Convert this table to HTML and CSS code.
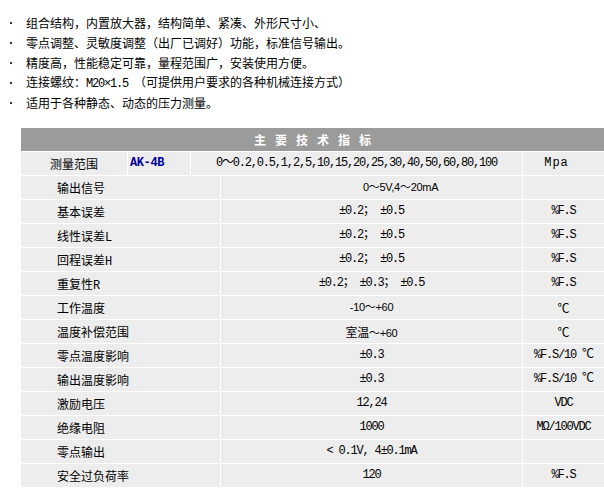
FILE: index.html
```html
<!DOCTYPE html>
<html lang="zh">
<head>
<meta charset="utf-8">
<title>主要技术指标</title>
<link rel="stylesheet" href="styles.css">
</head>
<body>
<ul class="features">
  <li><span class="dot"></span><span>组合结构，内置放大器，结构简单、紧凑、外形尺寸小、</span></li>
  <li><span class="dot"></span><span>零点调整、灵敏度调整（出厂已调好）功能，标准信号输出。</span></li>
  <li><span class="dot"></span><span>精度高，性能稳定可靠，量程范围广，安装使用方便。</span></li>
  <li><span class="dot"></span><span>连接螺纹：<span class="mono">M20×1.5 </span>（可提供用户要求的各种机械连接方式）</span></li>
  <li><span class="dot"></span><span>适用于各种静态、动态的压力测量。</span></li>
</ul>

<div class="spec">
  <div class="head">主要技术指标</div>
  <div class="row first">
    <div class="cell c">测量范围</div>
    <div class="cell model">AK-4B</div>
    <div class="cell c mono">0～0.2,0.5,1,2,5,10,15,20,25,30,40,50,60,80,100</div>
    <div class="cell c mono wide">Mpa</div>
  </div>
  <div class="row">
    <div class="cell label">输出信号</div>
    <div class="cell sans shift">0～5V,4～20mA</div>
    <div class="cell"></div>
  </div>
  <div class="row">
    <div class="cell label">基本误差</div>
    <div class="cell c mono">±0.2； ±0.5</div>
    <div class="cell c mono">%F.S</div>
  </div>
  <div class="row">
    <div class="cell label">线性误差<span class="mono">L</span></div>
    <div class="cell c mono">±0.2； ±0.5</div>
    <div class="cell c mono">%F.S</div>
  </div>
  <div class="row">
    <div class="cell label">回程误差<span class="mono">H</span></div>
    <div class="cell c mono">±0.2； ±0.5</div>
    <div class="cell c mono">%F.S</div>
  </div>
  <div class="row">
    <div class="cell label">重复性<span class="mono">R</span></div>
    <div class="cell c mono">±0.2； ±0.3； ±0.5</div>
    <div class="cell c mono">%F.S</div>
  </div>
  <div class="row">
    <div class="cell label">工作温度</div>
    <div class="cell c sans">-10～+60</div>
    <div class="cell c">℃</div>
  </div>
  <div class="row">
    <div class="cell label">温度补偿范围</div>
    <div class="cell c sans"><span class="cjk">室温</span>～+60</div>
    <div class="cell c">℃</div>
  </div>
  <div class="row">
    <div class="cell label">零点温度影响</div>
    <div class="cell c mono">±0.3</div>
    <div class="cell c mono">%F.S/10 ℃</div>
  </div>
  <div class="row">
    <div class="cell label">输出温度影响</div>
    <div class="cell c mono">±0.3</div>
    <div class="cell c mono">%F.S/10 ℃</div>
  </div>
  <div class="row">
    <div class="cell label">激励电压</div>
    <div class="cell c mono">12,24</div>
    <div class="cell c mono">VDC</div>
  </div>
  <div class="row">
    <div class="cell label">绝缘电阻</div>
    <div class="cell c mono">1000</div>
    <div class="cell c mono">MΩ/100VDC</div>
  </div>
  <div class="row">
    <div class="cell label">零点输出</div>
    <div class="cell c mono">&lt; 0.1V, 4±0.1mA</div>
    <div class="cell"></div>
  </div>
  <div class="row">
    <div class="cell label">安全过负荷率</div>
    <div class="cell c mono">120</div>
    <div class="cell c mono">%F.S</div>
  </div>
</div>
</body>
</html>
```

FILE: styles.css
```css
html, body {
  margin: 0;
  padding: 0;
  background: #ffffff;
}

body {
  font-family: "Noto Sans CJK SC", "Noto Sans", sans-serif;
  font-size: 12px;
  color: #000000;
  width: 604px;
  overflow: hidden;
}

.features {
  list-style: none;
  margin: 0;
  padding: 13px 0 0 0;
}

.features li {
  display: flex;
  align-items: center;
  height: 20px;
  line-height: 20px;
  padding-left: 10px;
}

.dot {
  display: inline-block;
  width: 2px;
  height: 2px;
  background: #333333;
  margin-right: 14px;
  flex: none;
}

.mono {
  font-family: "Liberation Mono", "Noto Sans CJK SC", monospace;
  letter-spacing: -1.2px;
}

.sans {
  font-family: "Liberation Sans", "Noto Sans CJK SC", sans-serif;
  font-size: 11px;
  letter-spacing: -0.3px;
}

.cjk {
  font-family: "Noto Sans CJK SC", sans-serif;
  font-size: 12px;
}

.spec {
  margin: 15px 0 0 21px;
  width: 583px;
  display: flex;
  flex-direction: column;
  gap: 1px;
  background: #ffffff;
}

.head {
  height: 23px;
  line-height: 23px;
  background: #9b9b9b;
  color: #ffffff;
  font-weight: bold;
  text-align: center;
  letter-spacing: 9px;
  padding-left: 9px;
}

.row {
  display: grid;
  grid-template-columns: 199px 301px 81px;
  gap: 1px;
  height: 23px;
}

.row.first {
  grid-template-columns: 106px 62px 331px 81px;
}

.cell {
  background: #ededed;
  height: 23px;
  line-height: 23px;
  white-space: nowrap;
  overflow: hidden;
}

.c {
  text-align: center;
}

.label {
  padding-left: 36px;
}

.model {
  padding-left: 2px;
  font-family: "Liberation Mono", monospace;
  font-weight: bold;
  color: #000099;
  letter-spacing: -0.4px;
}

.shift {
  padding-left: 142px;
}

.wide {
  letter-spacing: 1px;
  padding-right: 14px;
}
```
